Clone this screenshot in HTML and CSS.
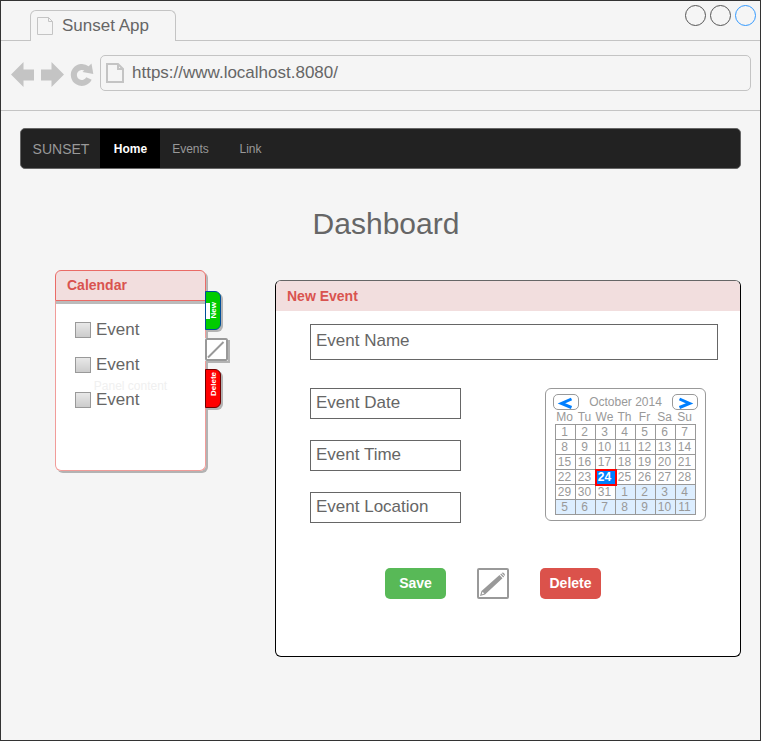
FILE: index.html
```html
<!DOCTYPE html>
<html lang="en">
<head>
<meta charset="utf-8">
<title>Sunset App</title>
<link rel="stylesheet" href="styles.css">
</head>
<body>
<div class="window">
  <header class="tab-strip">
    <div class="tab">
      <svg class="page-icon" width="18" height="20" viewBox="0 0 18 20"><path d="M1.500 1.500h11l4 4v13h-15zM12.500 1.500v4h4"/></svg>
      <span>Sunset App</span>
    </div>
    <div class="window-controls">
      <button class="dot" aria-label="Minimize"></button>
      <button class="dot" aria-label="Maximize"></button>
      <button class="dot dot-blue" aria-label="Close"></button>
    </div>
  </header>
  <div class="toolbar">
    <div class="history">
      <button class="tool" aria-label="Back"><svg width="23" height="26" viewBox="0 0 23 26"><path d="M0 12.500 12.500 0v7.500H23v11H12.500V25z"/></svg></button>
      <button class="tool" aria-label="Forward"><svg width="23" height="26" viewBox="0 0 23 26"><path d="M23 12.500 10.500 0v7.500H0v11h10.500V25z"/></svg></button>
      <button class="tool" aria-label="Reload"><svg width="22" height="26" viewBox="0 0 22 26"><path class="reload-arc" d="M18 16.500A8 8 0 1 1 16 6.800"/><path d="M20.500 1.500 22.300 12 11.500 10z"/></svg></button>
    </div>
    <div class="address">
      <svg class="page-icon page-icon-bold" width="18" height="20" viewBox="0 0 18 20"><path d="M1 1h11l5 5v13H1zM12 1v5h5"/></svg>
      <input class="address-input" aria-label="Address" value="https://www.localhost.8080/">
    </div>
  </div>
  <main class="page">
    <nav class="navbar">
      <a class="brand" href="#">SUNSET</a>
      <a class="nav-item nav-active" href="#">Home</a>
      <a class="nav-item" href="#">Events</a>
      <a class="nav-item" href="#">Link</a>
    </nav>
    <h1 class="title">Dashboard</h1>
    <div class="columns">
      <section class="calendar-panel">
        <h2 class="panel-title calendar-title">Calendar</h2>
        <div class="calendar-body">
          <span class="ghost">Panel content</span>
          <label class="check"><input type="checkbox">Event</label>
          <label class="check"><input type="checkbox">Event</label>
          <label class="check"><input type="checkbox">Event</label>
        </div>
        <div class="side-tabs">
          <button class="side-tab side-new"><span>New</span></button>
          <button class="side-edit" aria-label="Edit">
            <svg width="23" height="23" viewBox="0 0 23 23"><rect class="frame" x="1" y="1" width="21" height="21" rx="1"/><path class="stroke" d="M3 19.500 18.500 4"/></svg>
          </button>
          <button class="side-tab side-delete"><span>Delete</span></button>
        </div>
      </section>
      <section class="event-panel">
        <h2 class="panel-title event-title">New Event</h2>
        <form class="event-form">
          <input class="field field-name" aria-label="Event Name" value="Event Name">
          <div class="details">
            <div class="detail-fields">
              <input class="field" aria-label="Event Date" value="Event Date">
              <input class="field" aria-label="Event Time" value="Event Time">
              <input class="field" aria-label="Event Location" value="Event Location">
            </div>
            <div class="picker">
              <div class="picker-head">
                <button type="button" class="month-step" aria-label="Previous month"><svg width="14" height="12" viewBox="0 0 14 12"><path d="M12.500 2 2.500 6.500l10 4"/></svg></button>
                <span>October 2014</span>
                <button type="button" class="month-step" aria-label="Next month"><svg width="14" height="12" viewBox="0 0 14 12"><path d="M1.500 2l10 4.500-10 4"/></svg></button>
              </div>
              <table class="days">
                <thead><tr><th>Mo</th><th>Tu</th><th>We</th><th>Th</th><th>Fr</th><th>Sa</th><th>Su</th></tr></thead>
                <tbody>
                <tr><td>1</td><td>2</td><td>3</td><td>4</td><td>5</td><td>6</td><td>7</td></tr>
                <tr><td>8</td><td>9</td><td>10</td><td>11</td><td>12</td><td>13</td><td>14</td></tr>
                <tr><td>15</td><td>16</td><td>17</td><td>18</td><td>19</td><td>20</td><td>21</td></tr>
                <tr><td>22</td><td>23</td><td class="today">24</td><td>25</td><td>26</td><td>27</td><td>28</td></tr>
                <tr><td>29</td><td>30</td><td>31</td><td class="next">1</td><td class="next">2</td><td class="next">3</td><td class="next">4</td></tr>
                <tr><td class="next">5</td><td class="next">6</td><td class="next">7</td><td class="next">8</td><td class="next">9</td><td class="next">10</td><td class="next">11</td></tr>
                </tbody>
              </table>
            </div>
          </div>
          <div class="actions">
            <button type="button" class="btn btn-save">Save</button>
            <button type="button" class="edit" aria-label="Edit">
              <svg width="32" height="31" viewBox="0 0 32 31"><rect class="frame" x="1" y="1" width="30" height="29" rx="1"/><path class="pencil" d="M3 28l1.500-5L22.500 7l3 3.200L8 26.500zM23.200 6.300l1-.9 3 3.200-1 .9zM24.800 4.900q1-1 2.300.3t.6 2.800z"/><path class="tip" d="M4.600 26.400l.9-2.600 1.800 1.700z"/></svg>
            </button>
            <button type="button" class="btn btn-delete">Delete</button>
          </div>
        </form>
      </section>
    </div>
  </main>
</div>
</body>
</html>
```
FILE: styles.css
```css
* {
  box-sizing: border-box;
}

body {
  margin: 0;
  background: #f5f5f5;
  color: #666;
  font-family: "Liberation Sans", Arial, sans-serif;
  font-size: 17px;
}

button,
input {
  margin: 0;
  padding: 0;
  border: 0;
  background: none;
  color: inherit;
  font: inherit;
}

svg {
  display: block;
  overflow: visible;
}

.window {
  min-height: 100vh;
  border: 1px solid #333;
}

/* Browser chrome */
.tab-strip {
  display: flex;
  justify-content: space-between;
  height: 40px;
  padding: 0 4px 0 29px;
  border-bottom: 1px solid #c4c4c4;
}

.tab {
  display: flex;
  align-items: center;
  gap: 8px;
  width: 146px;
  height: 31px;
  margin-top: 9px;
  padding-left: 5px;
  border: 1px solid #c4c4c4;
  border-bottom: 0;
  border-radius: 6px 6px 0 0;
  background: #f5f5f5;
}

.page-icon {
  fill: none;
  stroke: #c4c4c4;
}

.page-icon-bold {
  stroke-width: 2;
}

.window-controls {
  display: flex;
  gap: 4px;
  padding-top: 4px;
}

.dot {
  width: 21px;
  height: 21px;
  border: 1px solid #555;
  border-radius: 50%;
}

.dot-blue {
  border-color: #3399ff;
}

.toolbar {
  display: flex;
  align-items: center;
  gap: 7px;
  height: 70px;
  padding: 0 9px 6px 10px;
  border-bottom: 1px solid #c4c4c4;
}

.history {
  display: flex;
  gap: 7px;
  padding-top: 4px;
  fill: #c4c4c4;
}

.reload-arc {
  fill: none;
  stroke: #c4c4c4;
  stroke-width: 6;
}

.address {
  display: flex;
  flex: 1;
  align-items: center;
  gap: 8px;
  height: 36px;
  padding-left: 5px;
  border: 1px solid #c4c4c4;
  border-radius: 5px;
}

.address-input {
  flex: 1;
  min-width: 0;
}

/* Page */
.page {
  padding: 17px 19px;
}

.navbar {
  display: flex;
  height: 41px;
  overflow: hidden;
  border: 1px solid #666;
  border-radius: 5px;
  background: #222;
  font-size: 12px;
}

.navbar a {
  display: flex;
  align-items: center;
  justify-content: center;
  padding-left: 1px;
  color: #999;
  text-decoration: none;
}

.brand {
  width: 79px;
  font-size: 14px;
}

.nav-item {
  width: 60px;
}

.navbar .nav-active {
  background: #000;
  color: #fff;
  font-weight: bold;
}

.title {
  margin: 37px 0 28px;
  padding-left: 11px;
  font-size: 30px;
  font-weight: normal;
  line-height: 36px;
  text-align: center;
}

.columns {
  display: flex;
  align-items: flex-start;
  gap: 69px;
  padding-left: 35px;
}

.panel-title {
  margin: 0;
  padding-left: 11px;
  background: #f2dede;
  color: #d9534f;
  font-size: 14px;
  line-height: 29px;
}

/* Calendar panel */
.calendar-panel {
  position: relative;
  width: 151px;
  border-radius: 6px;
  background: #fff;
  box-shadow: 2px 2px 0 #b3b3b3;
}

.calendar-title {
  border: 1px solid #ea6b66;
  border-radius: 6px 6px 0 0;
  box-shadow: 1px 3px 0 #bbb;
}

.calendar-body {
  position: relative;
  display: flex;
  flex-direction: column;
  gap: 17px;
  height: 170px;
  padding: 20px 19px;
  border: 1px solid #f19c99;
  border-top: 0;
  border-radius: 0 0 6px 6px;
}

.ghost {
  position: absolute;
  inset: 0;
  display: flex;
  align-items: center;
  justify-content: center;
  color: #f0f0f0;
  font-size: 12px;
}

.check {
  position: relative;
  display: flex;
  align-items: center;
  gap: 5px;
  line-height: 18px;
}

.check input {
  width: 16px;
  height: 16px;
  border: 1px solid #999;
  background: linear-gradient(#e8e8e8, #ccc);
  appearance: none;
}

.side-tabs {
  position: absolute;
  top: 21px;
  left: 150px;
  display: flex;
  flex-direction: column;
  gap: 8px;
}

.side-tab {
  display: flex;
  justify-content: flex-end;
  width: 16px;
  height: 39px;
  padding-right: 2px;
  border: 1px solid #004d99;
  border-radius: 0 6px 6px 0;
  box-shadow: 2px 2px 0 #b3b3b3;
  color: #fff;
  font-size: 8px;
  font-weight: bold;
  line-height: 9px;
}

.side-tab span {
  writing-mode: vertical-rl;
  transform: rotate(180deg);
}

.side-new {
  align-items: center;
  background: linear-gradient(#fff, #fff) 0 50% / 4px 16px no-repeat #00cc00;
}

.side-delete {
  align-items: flex-start;
  padding-top: 2px;
  border-color: #6f0000;
  background: #f00;
}

.side-edit {
  width: 23px;
  background: #fff;
  box-shadow: 2px 2px 0 #b3b3b3;
}

.frame {
  fill: #fff;
  stroke: #999;
  stroke-width: 2;
}

.stroke {
  stroke: #999;
  stroke-width: 2;
}

/* Event panel */
.event-panel {
  flex: 1;
  margin-top: 10px;
  border: 1px solid #000;
  border-top-color: #666;
  border-radius: 6px;
  background: #fff;
}

.event-title {
  padding-top: 1px;
  border-radius: 5px 5px 0 0;
}

.event-form {
  padding: 13px 22px 57px 34px;
}

.field {
  display: block;
  width: 100%;
  height: 31px;
  padding: 0 5px 2px;
  border: 1px solid #666;
}

.field-name {
  height: 36px;
  padding-bottom: 3px;
}

.details {
  display: flex;
  justify-content: space-between;
  margin: 28px 12px 45px 0;
}

.detail-fields {
  display: flex;
  flex-direction: column;
  gap: 21px;
  width: 151px;
}

.picker {
  width: 161px;
  height: 133px;
  padding: 5px 7px;
  border: 1px solid #999;
  border-radius: 6px;
  color: #999;
  font-size: 12px;
}

.picker-head {
  display: flex;
  align-items: center;
  justify-content: space-between;
  height: 16px;
}

.month-step {
  display: flex;
  align-items: flex-end;
  justify-content: center;
  width: 26px;
  height: 16px;
  border: 1px solid #999;
  border-radius: 5px;
}

.month-step svg {
  fill: none;
  stroke: #007fff;
  stroke-width: 3;
}

.days {
  width: 141px;
  margin-left: 2px;
  border-collapse: collapse;
  table-layout: fixed;
  line-height: 14px;
  text-align: center;
}

.days th {
  padding: 0 2px 0 0;
  font-weight: normal;
}

.days td {
  height: 15px;
  padding: 0 2px 0 0;
  border: 1px solid #999;
}

.days .next {
  background: #ddeeff;
}

.days .today {
  outline: 2px solid #f00;
  outline-offset: -1px;
  background: #007fff;
  color: #fff;
  font-weight: bold;
}

.actions {
  display: flex;
  gap: 31px;
  padding-left: 75px;
}

.btn {
  width: 61px;
  height: 31px;
  padding-bottom: 1px;
  border-radius: 5px;
  color: #fff;
  font-size: 14px;
  font-weight: bold;
}

.btn-save {
  background: #58b957;
}

.btn-delete {
  background: #db524b;
}

.pencil {
  fill: #999;
}

.tip {
  fill: #fff;
}
```
